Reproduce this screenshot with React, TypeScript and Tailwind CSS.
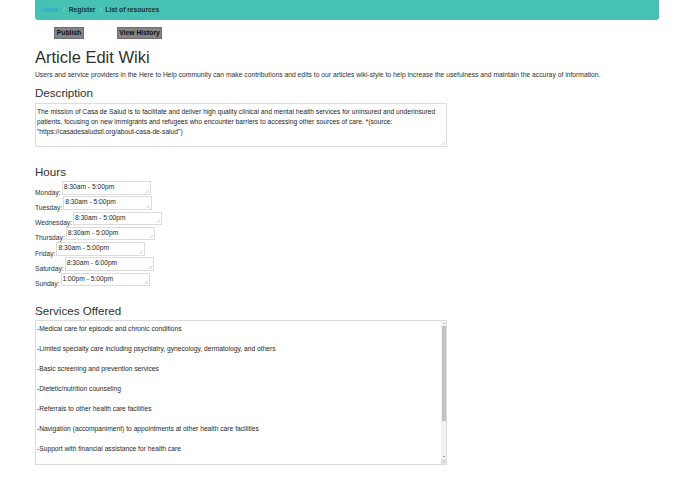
import React from 'react';

const HOURS: { day: string; value: string }[] = [
  { day: 'Monday', value: '8:30am - 5:00pm' },
  { day: 'Tuesday', value: '8:30am - 5:00pm' },
  { day: 'Wednesday', value: '8:30am - 5:00pm' },
  { day: 'Thursday', value: '8:30am - 5:00pm' },
  { day: 'Friday', value: '8:30am - 5:00pm' },
  { day: 'Saturday', value: '8:30am - 6:00pm' },
  { day: 'Sunday', value: '1:00pm - 5:00pm' },
];

const SERVICES = [
  '-Medical care for episodic and chronic conditions',
  '-Limited specialty care including psychiatry, gynecology, dermatology, and others',
  '-Basic screening and prevention services',
  '-Dietetic/nutrition counseling',
  '-Referrals to other health care facilities',
  '-Navigation (accompaniment) to appointments at other health care facilities',
  '-Support with financial assistance for health care',
  '-Mental health services including counseling and therapy',
  '-Health education and outreach',
  '-Interpretation services',
].join('\n\n');

const DESCRIPTION =
  'The mission of Casa de Salud is to facilitate and deliver high quality clinical and mental health services for uninsured and underinsured patients, focusing on new immigrants and refugees who encounter barriers to accessing other sources of care. *(source: "https://casadesaludstl.org/about-casa-de-salud")';

const FONT = 'font-["Liberation_Sans",Arial,sans-serif]';

// tiny drag corner like the browser's textarea resizer, scaled down
function Grip() {
  return (
    <svg className="absolute right-[1px] bottom-[1px] w-[4px] h-[4px]" viewBox="0 0 4 4">
      <path d="M4 0.5 L0.5 4 M4 2.3 L2.3 4" stroke="#b5b5b5" strokeWidth="0.6" fill="none" />
    </svg>
  );
}

function Field({ value, className, inner }: { value: string; className: string; inner: string }) {
  return (
    <div className={`relative border border-[#dcdcdc] bg-white ${className}`}>
      <textarea
        defaultValue={value}
        rows={1}
        className={`block w-full h-full resize-none overflow-hidden outline-none bg-transparent text-[#262626] text-[6.7px] leading-[10px] ${FONT} ${inner}`}
      />
      <Grip />
    </div>
  );
}

export default function App() {
  return (
    <div className={`min-h-[494px] bg-white text-[#2f2f2f] ${FONT}`}>
      <div className="pl-[35px] w-[659px]">
        {/* breadcrumb bar */}
        <nav className="h-[20px] bg-[#46c1b4] rounded-b-[3px] px-[6px] flex items-center text-[6.7px] font-bold">
          <span className="text-[#2a9de0] font-normal">Home</span>
          <span className="px-[4px] text-[#a9dcd6] font-normal">/</span>
          <span className="text-[#22302f]">Register</span>
          <span className="px-[4px] text-[#a9dcd6] font-normal">/</span>
          <span className="text-[#22302f]">List of resources</span>
        </nav>

        {/* actions */}
        <div className="mt-[7px] ml-[19px] flex gap-[33px]">
          <button className="h-[12px] w-[30px] bg-[#858585] border border-[#6f6f6f] text-[6.8px] font-bold text-[#111] leading-none">
            Publish
          </button>
          <button className="h-[12px] w-[45px] bg-[#858585] border border-[#6f6f6f] text-[6.8px] font-bold text-[#111] leading-none">
            View History
          </button>
        </div>

        <h1 className="mt-[8px] text-[16.5px] leading-[20px]">Article Edit Wiki</h1>
        <p className="mt-[3px] text-[6.75px] leading-[10px]">
          Users and service providers in the Here to Help community can make contributions and edits to our articles
          wiki-style to help increase the usefulness and maintain the accuray of information.
        </p>

        <h3 className="mt-[6px] text-[11.6px] leading-[14px]">Description</h3>
        <Field value={DESCRIPTION} className="mt-[3px] w-[412px] h-[44px]" inner="px-[1px] pt-[3px]" />

        <h3 className="mt-[18px] text-[11.6px] leading-[14px]">Hours</h3>
        <div className="mt-[2px] flex flex-col gap-[1.75px]">
          {HOURS.map(h => (
            <div key={h.day} className="flex items-end gap-[1px]">
              <span className="text-[6.7px] leading-[7px] mb-[-1px]">{h.day}:</span>
              <Field value={h.value} className="w-[89px] h-[13.5px]" inner="px-[1px] pt-0" />
            </div>
          ))}
        </div>

        <h3 className="mt-[18px] text-[11.6px] leading-[14px]">Services Offered</h3>
        <div className="relative mt-[2px] w-[412px] h-[145px] flex border border-[#dcdcdc] bg-white">
          <textarea
            defaultValue={SERVICES}
            className={`flex-1 h-full resize-none overflow-hidden outline-none px-[1px] pt-[3px] text-[#262626] text-[6.7px] leading-[10px] ${FONT}`}
          />
          {/* scrollbar */}
          <div className="w-[5px] flex flex-col items-center bg-[#f1f1f1]">
            <div className="h-[5px] flex items-center justify-center">
              <div className="w-0 h-0 border-x-[1.5px] border-x-transparent border-b-[1.5px] border-b-[#a3a3a3]" />
            </div>
            <div className="w-[4px] h-[95px] bg-[#c3c3c3]" />
            <div className="flex-1" />
            <div className="h-[5px] flex items-center justify-center">
              <div className="w-0 h-0 border-x-[1.5px] border-x-transparent border-t-[1.5px] border-t-[#505050]" />
            </div>
            <div className="h-[5px] w-full bg-[#e6e6e6]" />
          </div>
          <Grip />
        </div>
      </div>
    </div>
  );
}
